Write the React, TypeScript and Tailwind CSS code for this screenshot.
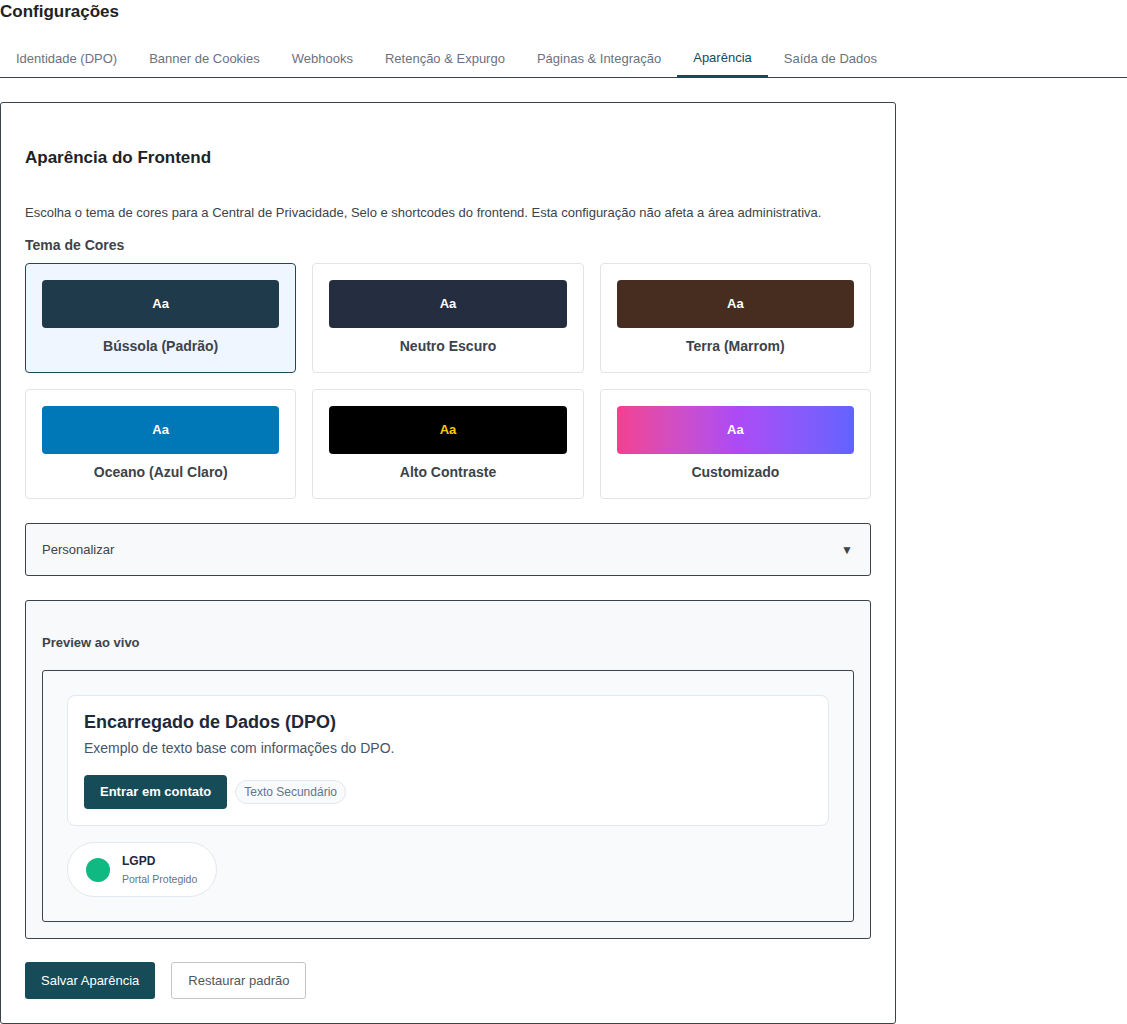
import React, { useState } from 'react';

const tabs = [
  'Identidade (DPO)',
  'Banner de Cookies',
  'Webhooks',
  'Retenção & Expurgo',
  'Páginas & Integração',
  'Aparência',
  'Saída de Dados',
];

interface Theme {
  id: string;
  name: string;
  swatch: string;
  text: string;
}

const themes: Theme[] = [
  { id: 'bussola', name: 'Bússola (Padrão)', swatch: 'bg-[#1e3a4b]', text: 'text-white' },
  { id: 'neutro', name: 'Neutro Escuro', swatch: 'bg-[#252e40]', text: 'text-white' },
  { id: 'terra', name: 'Terra (Marrom)', swatch: 'bg-[#472d20]', text: 'text-white' },
  { id: 'oceano', name: 'Oceano (Azul Claro)', swatch: 'bg-[#0077b6]', text: 'text-white' },
  { id: 'contraste', name: 'Alto Contraste', swatch: 'bg-black', text: 'text-[#ffcc00]' },
  {
    id: 'custom',
    name: 'Customizado',
    swatch: 'bg-gradient-to-r from-[#f43f90] via-[#ad4af5] to-[#6163ff]',
    text: 'text-white',
  },
];

export default function App() {
  const [selected, setSelected] = useState('bussola');
  const [activeTab, setActiveTab] = useState('Aparência');

  return (
    <div className="min-h-screen bg-white font-['Liberation_Sans',Arial,sans-serif] text-[#3c434a]">
      <h1 className="text-[17px] font-bold leading-[23px] text-[#1d2327]">Configurações</h1>

      {/* Tabs */}
      <nav className="mt-[18px] flex border-b border-[#3c434a]">
        {tabs.map((tab) => {
          const active = tab === activeTab;
          return (
            <button
              key={tab}
              onClick={() => setActiveTab(tab)}
              className={`-mb-px border-b-[3px] px-4 text-[13px] leading-[18px] ${
                active ? 'border-[#134b58] pt-[8px] pb-[8px] text-[#134b58]' : 'border-transparent pt-[9px] pb-[7px] text-[#6b7280]'
              }`}
            >
              {tab}
            </button>
          );
        })}
      </nav>

      {/* Card */}
      <div className="mt-6 w-[896px] rounded-[3px] border border-[#3c434a] px-6 pt-[43px] pb-6">
        <h2 className="text-[17px] font-bold leading-[23px] text-[#1d2327]">Aparência do Frontend</h2>
        <p className="mt-[35px] text-[13px] leading-[18px] text-[#3c434a]">
          Escolha o tema de cores para a Central de Privacidade, Selo e shortcodes do frontend. Esta configuração não afeta a área administrativa.
        </p>

        <h3 className="mt-[14px] text-[14px] font-bold leading-[18px] text-[#3c434a]">Tema de Cores</h3>

        <div className="mt-[9px] grid grid-cols-3 gap-4">
          {themes.map((t) => {
            const isSel = t.id === selected;
            return (
              <button
                key={t.id}
                onClick={() => setSelected(t.id)}
                className={`flex h-[110px] flex-col items-stretch rounded-[4px] border p-4 text-center ${
                  isSel ? 'border-[#1a4a5a] bg-[#eff6ff]' : 'border-[#e2e4e8] bg-white'
                }`}
              >
                <div
                  className={`flex h-12 items-center justify-center rounded-[4px] text-[13px] font-bold ${t.swatch} ${t.text}`}
                >
                  Aa
                </div>
                <div className="mt-[9px] text-[14px] font-bold leading-[18px] text-[#3c434a]">{t.name}</div>
              </button>
            );
          })}
        </div>

        {/* Personalizar */}
        <div className="mt-6 flex h-[53px] items-center justify-between rounded-[3px] border border-[#3c434a] bg-[#f8f9fb] pl-4 pr-[17px] text-[13px] text-[#3c434a]">
          <span>Personalizar</span>
          <span className="text-[12px] text-[#3c434a]">▼</span>
        </div>

        {/* Preview */}
        <div className="mt-6 rounded-[3px] border border-[#3c434a] bg-[#f8f9fb] px-4 pt-[33px] pb-4">
          <h4 className="text-[13px] font-bold leading-[18px] text-[#3c434a]">Preview ao vivo</h4>
          <div className="mt-[18px] rounded-[3px] border border-[#3c434a] bg-[#f8fafc] px-6 pt-6 pb-6">
            <div className="rounded-lg border border-[#e2e8f0] bg-white px-4 pt-[14px] pb-4">
              <div className="text-[18px] font-bold leading-[24px] text-[#1e293b]">Encarregado de Dados (DPO)</div>
              <div className="mt-[4px] text-[14px] leading-[20px] text-[#475569]">
                Exemplo de texto base com informações do DPO.
              </div>
              <div className="mt-[17px] flex items-center gap-2">
                <button className="h-[34px] rounded-[4px] bg-[#164b58] px-4 text-[13px] font-bold text-white">
                  Entrar em contato
                </button>
                <span className="rounded-full border border-[#e2e8f0] bg-[#f8fafc] px-2 py-[3px] text-[12px] leading-[16px] text-[#64748b]">
                  Texto Secundário
                </span>
              </div>
            </div>

            <div className="mt-4 inline-flex items-center gap-3 rounded-full border border-[#e2e8f0] bg-white py-[10px] pl-[18px] pr-[19px]">
              <span className="h-6 w-6 rounded-full bg-[#10b981]" />
              <div className="flex flex-col">
                <span className="text-[12px] font-bold leading-[16px] text-[#1e293b]">LGPD</span>
                <span className="mt-[3px] text-[10.5px] leading-[14px] text-[#64748b]">Portal Protegido</span>
              </div>
            </div>
          </div>
        </div>

        {/* Actions */}
        <div className="mt-[23px] flex gap-4">
          <button className="h-[37px] rounded-[3px] bg-[#164b58] px-4 text-[13px] text-white">Salvar Aparência</button>
          <button className="h-[37px] rounded-[3px] border border-[#c3c4c7] bg-white px-4 text-[13px] text-[#50575e]">
            Restaurar padrão
          </button>
        </div>
      </div>
    </div>
  );
}
